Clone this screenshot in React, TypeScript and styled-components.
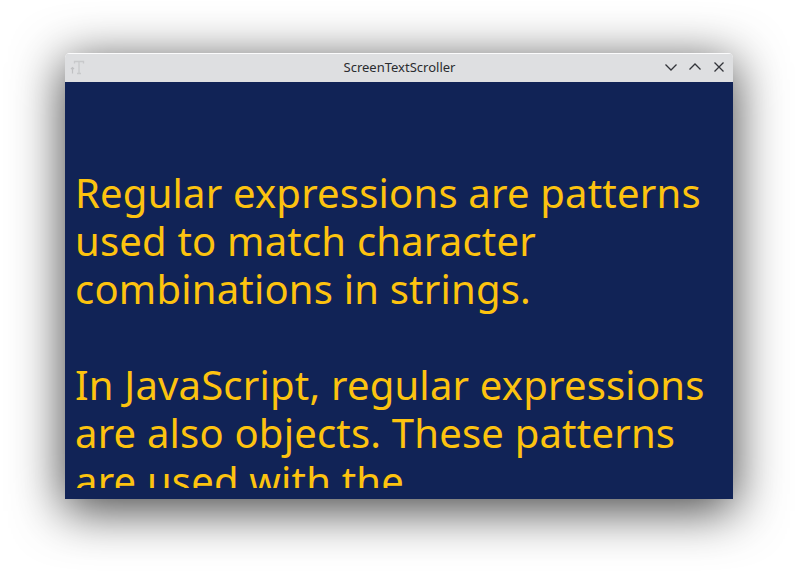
import { createGlobalStyle } from "styled-components";
import styled from "styled-components";

const Global = createGlobalStyle`
  html, body {
    margin: 0;
    padding: 0;
    height: 100%;
    background: #ffffff;
    overflow: hidden;
  }
`;

const Desktop = styled.div`
  width: 798px;
  height: 576px;
  padding: 53px 0 0 65px;
  box-sizing: border-box;
`;

const Window = styled.div`
  width: 668px;
  height: 446px;
  display: flex;
  flex-direction: column;
  border-radius: 5px 5px 0 0;
  overflow: hidden;
  box-shadow: 0 10px 50px 2px rgba(0, 0, 0, 0.72);
`;

const TitleBar = styled.div`
  flex: none;
  height: 29px;
  box-sizing: border-box;
  display: grid;
  grid-template-columns: 1fr auto 1fr;
  align-items: center;
  padding: 0 6px 2px 4px;
  background: #dedfe1;
  border-top: 1px solid #fbfbfc;
`;

const AppIcon = styled.svg`
  width: 16px;
  height: 16px;
`;

const Title = styled.div`
  font-family: "Noto Sans", "Open Sans", sans-serif;
  font-size: 13px;
  color: #2a2c30;
  white-space: nowrap;
  margin-left: 3px;
`;

const Controls = styled.div`
  display: flex;
  justify-content: flex-end;
  gap: 8px;
`;

const ControlIcon = styled.svg`
  width: 16px;
  height: 16px;
  fill: none;
  stroke: #33353a;
  stroke-width: 1.3;
`;

const Content = styled.div`
  flex: 1;
  min-height: 0;
  display: flex;
  padding: 0 22px 11px 10px;
  background: #112356;
`;

const Scroller = styled.div`
  flex: 1;
  overflow: hidden;
  padding-top: 87px;
  color: #fdc30f;
  font-family: "Noto Sans", "Open Sans", sans-serif;
  font-size: 40px;
  letter-spacing: 0.2px;
  line-height: 48px;
`;

const Paragraph = styled.p`
  margin: 0 0 48px;
`;

export default function App() {
  return (
    <>
      <Global />
      <Desktop>
        <Window>
          <TitleBar>
            <AppIcon viewBox="0 0 16 16">
              <path d="M5.500 4.500V2.500h9v2M10 2.500v12M8 14.500h4" fill="none" stroke="#c8c9cb" strokeWidth="1.3" />
              <path d="M3.500 14.500V8.500M2 10l1.500-1.500L5 10" fill="none" stroke="#c0c1c3" strokeWidth="1.2" />
            </AppIcon>
            <Title>ScreenTextScroller</Title>
            <Controls>
              <ControlIcon viewBox="0 0 16 16">
                <path d="M2.500 5.500L8 11l5.500-5.500" />
              </ControlIcon>
              <ControlIcon viewBox="0 0 16 16">
                <path d="M2.500 10.500L8 5l5.500 5.500" />
              </ControlIcon>
              <ControlIcon viewBox="0 0 16 16">
                <path d="M3.500 3.500l9 9M12.500 3.500l-9 9" />
              </ControlIcon>
            </Controls>
          </TitleBar>
          <Content>
            <Scroller>
              <Paragraph>
                Regular expressions are patterns used to match character combinations in strings.
              </Paragraph>
              <Paragraph>
                In JavaScript, regular expressions are also objects. These patterns are used with the
              </Paragraph>
            </Scroller>
          </Content>
        </Window>
      </Desktop>
    </>
  );
}
